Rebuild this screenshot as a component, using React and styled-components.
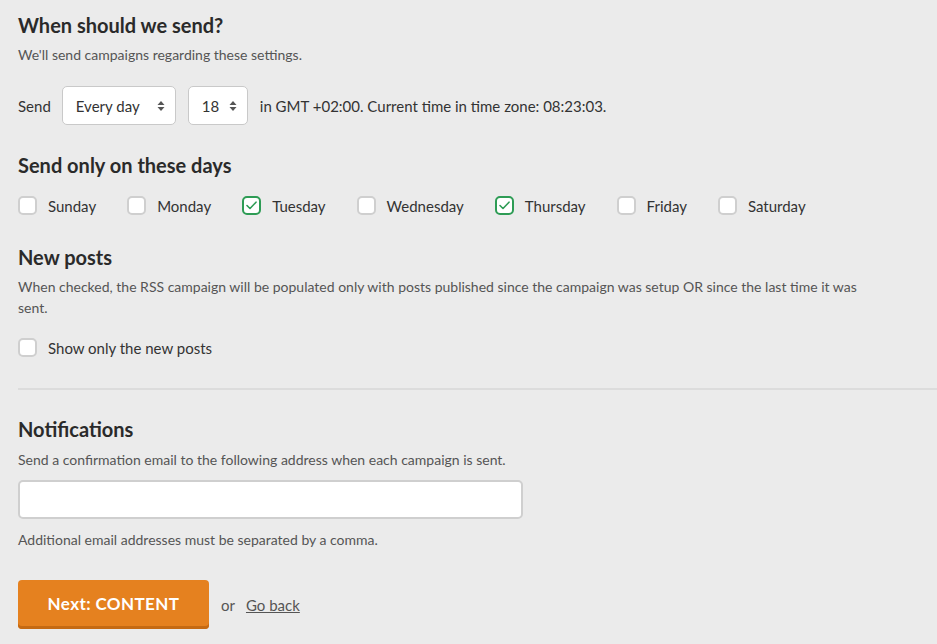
import React, { useState } from "react";
import styled, { createGlobalStyle, css } from "styled-components";

const GlobalStyle = createGlobalStyle`
  html, body {
    margin: 0;
    padding: 0;
    background: #ebebeb;
  }
  body {
    font-family: Lato, "Open Sans", Arial, sans-serif;
    color: #333;
  }
`;

const Page = styled.div`
  padding: 12px 0 16px 18px;
  min-height: 644px;
  box-sizing: border-box;
`;

const Section = styled.section`
  padding-right: 18px;
  margin-bottom: ${({ gap }) => gap || 0}px;
`;

const Heading = styled.h2`
  margin: 0 0 ${({ after }) => after ?? 6}px;
  font-size: 20px;
  line-height: 26px;
  font-weight: 700;
  color: #2a2a2a;
`;

const Hint = styled.p`
  margin: 0;
  font-size: 14px;
  line-height: 21px;
  color: #555;
  max-width: ${({ wide }) => (wide ? "850px" : "none")};
`;

const SendRow = styled.div`
  display: flex;
  align-items: center;
  gap: 11px;
  margin-top: ${({ top }) => top ?? 21}px;
  font-size: 15px;
  color: #333;
`;

const SelectBox = styled.div`
  display: flex;
  align-items: center;
  justify-content: space-between;
  box-sizing: border-box;
  width: ${({ w }) => w}px;
  height: 39px;
  margin-right: 1px;
  padding: 0 10px 0 13px;
  background: #fff;
  border: 1px solid #c9c9c9;
  border-radius: 5px;
  font-size: 15px;
  color: #333;
`;

const DayRow = styled.div`
  display: flex;
  align-items: center;
  gap: 31px;
  margin-top: 17px;
`;

const CheckLabel = styled.label`
  display: flex;
  align-items: center;
  gap: 11px;
  height: 21px;
  font-size: 15px;
  color: #333;
  cursor: pointer;
`;

const Box = styled.span`
  display: flex;
  align-items: center;
  justify-content: center;
  box-sizing: border-box;
  width: 19px;
  height: 19px;
  background: #fff;
  border: 2px solid #cfcfcf;
  border-radius: 5px;
  ${({ checked }) =>
    checked &&
    css`
      border-color: #2e9c55;
    `}
`;

const Divider = styled.hr`
  border: 0;
  border-top: 2px solid #dcdcdc;
  margin: 30px 0 26px;
`;

const EmailInput = styled.input`
  display: block;
  box-sizing: border-box;
  width: 505px;
  height: 39px;
  margin: 10px 0 10px;
  background: #fff;
  border: 2px solid #cfcfcf;
  border-radius: 5px;
  font-size: 14px;
  padding: 0 10px;
  outline: none;
`;

const Actions = styled.div`
  display: flex;
  align-items: center;
  gap: 11px;
  margin-top: 30px;
  font-size: 15px;
  color: #555;
`;

const PrimaryButton = styled.button`
  width: 191px;
  height: 49px;
  margin-right: 1px;
  border: 0;
  border-radius: 4px;
  background: #e5811f;
  box-shadow: inset 0 -3px 0 #c56a13;
  color: #fff;
  font-family: inherit;
  font-size: 17px;
  font-weight: 700;
  letter-spacing: 0.4px;
  padding-bottom: 4px;
  cursor: pointer;
`;

const BackLink = styled.a`
  color: #555;
  text-decoration: underline;
  cursor: pointer;
`;

const Arrows = () => (
  <svg width="8" height="12" viewBox="0 0 8 12">
    <path d="M4 1 L7.5 5 H0.5 Z" fill="#555" />
    <path d="M4 11 L7.5 7 H0.5 Z" fill="#555" />
  </svg>
);

const Check = ({ checked }) => (
  <Box checked={checked}>
    {checked && (
      <svg width="11" height="9" viewBox="0 0 11 9">
        <path
          d="M1 4.5 L4 7.5 L10 1.2"
          fill="none"
          stroke="#2e9c55"
          strokeWidth="1.6"
          strokeLinecap="round"
          strokeLinejoin="round"
        />
      </svg>
    )}
  </Box>
);

const days = [
  { name: "Sunday", on: false },
  { name: "Monday", on: false },
  { name: "Tuesday", on: true },
  { name: "Wednesday", on: false },
  { name: "Thursday", on: true },
  { name: "Friday", on: false },
  { name: "Saturday", on: false },
];

export default function App() {
  const [picked, setPicked] = useState(days.map((d) => d.on));
  const [onlyNew, setOnlyNew] = useState(false);

  const toggle = (i) =>
    setPicked((prev) => prev.map((v, j) => (j === i ? !v : v)));

  return (
    <>
      <GlobalStyle />
      <Page>
        <Section gap={27}>
          <Heading>When should we send?</Heading>
          <Hint>We'll send campaigns regarding these settings.</Hint>
          <SendRow>
            <span>Send</span>
            <SelectBox w={114}>
              Every day <Arrows />
            </SelectBox>
            <SelectBox w={60}>
              18 <Arrows />
            </SelectBox>
            <span>in GMT +02:00. Current time in time zone: 08:23:03.</span>
          </SendRow>
        </Section>

        <Section gap={28}>
          <Heading after={0}>Send only on these days</Heading>
          <DayRow>
            {days.map((d, i) => (
              <CheckLabel key={d.name} onClick={() => toggle(i)}>
                <Check checked={picked[i]} />
                {d.name}
              </CheckLabel>
            ))}
          </DayRow>
        </Section>

        <Section>
          <Heading>New posts</Heading>
          <Hint wide>
            When checked, the RSS campaign will be populated only with posts
            published since the campaign was setup OR since the last time it
            was sent.
          </Hint>
          <SendRow top={19}>
            <CheckLabel onClick={() => setOnlyNew(!onlyNew)}>
              <Check checked={onlyNew} />
              Show only the new posts
            </CheckLabel>
          </SendRow>
        </Section>

        <Divider />

        <Section>
          <Heading after={7}>Notifications</Heading>
          <Hint>
            Send a confirmation email to the following address when each
            campaign is sent.
          </Hint>
          <EmailInput type="text" />
          <Hint>Additional email addresses must be separated by a comma.</Hint>
          <Actions>
            <PrimaryButton>Next: CONTENT</PrimaryButton>
            <span>or</span>
            <BackLink>Go back</BackLink>
          </Actions>
        </Section>
      </Page>
    </>
  );
}
